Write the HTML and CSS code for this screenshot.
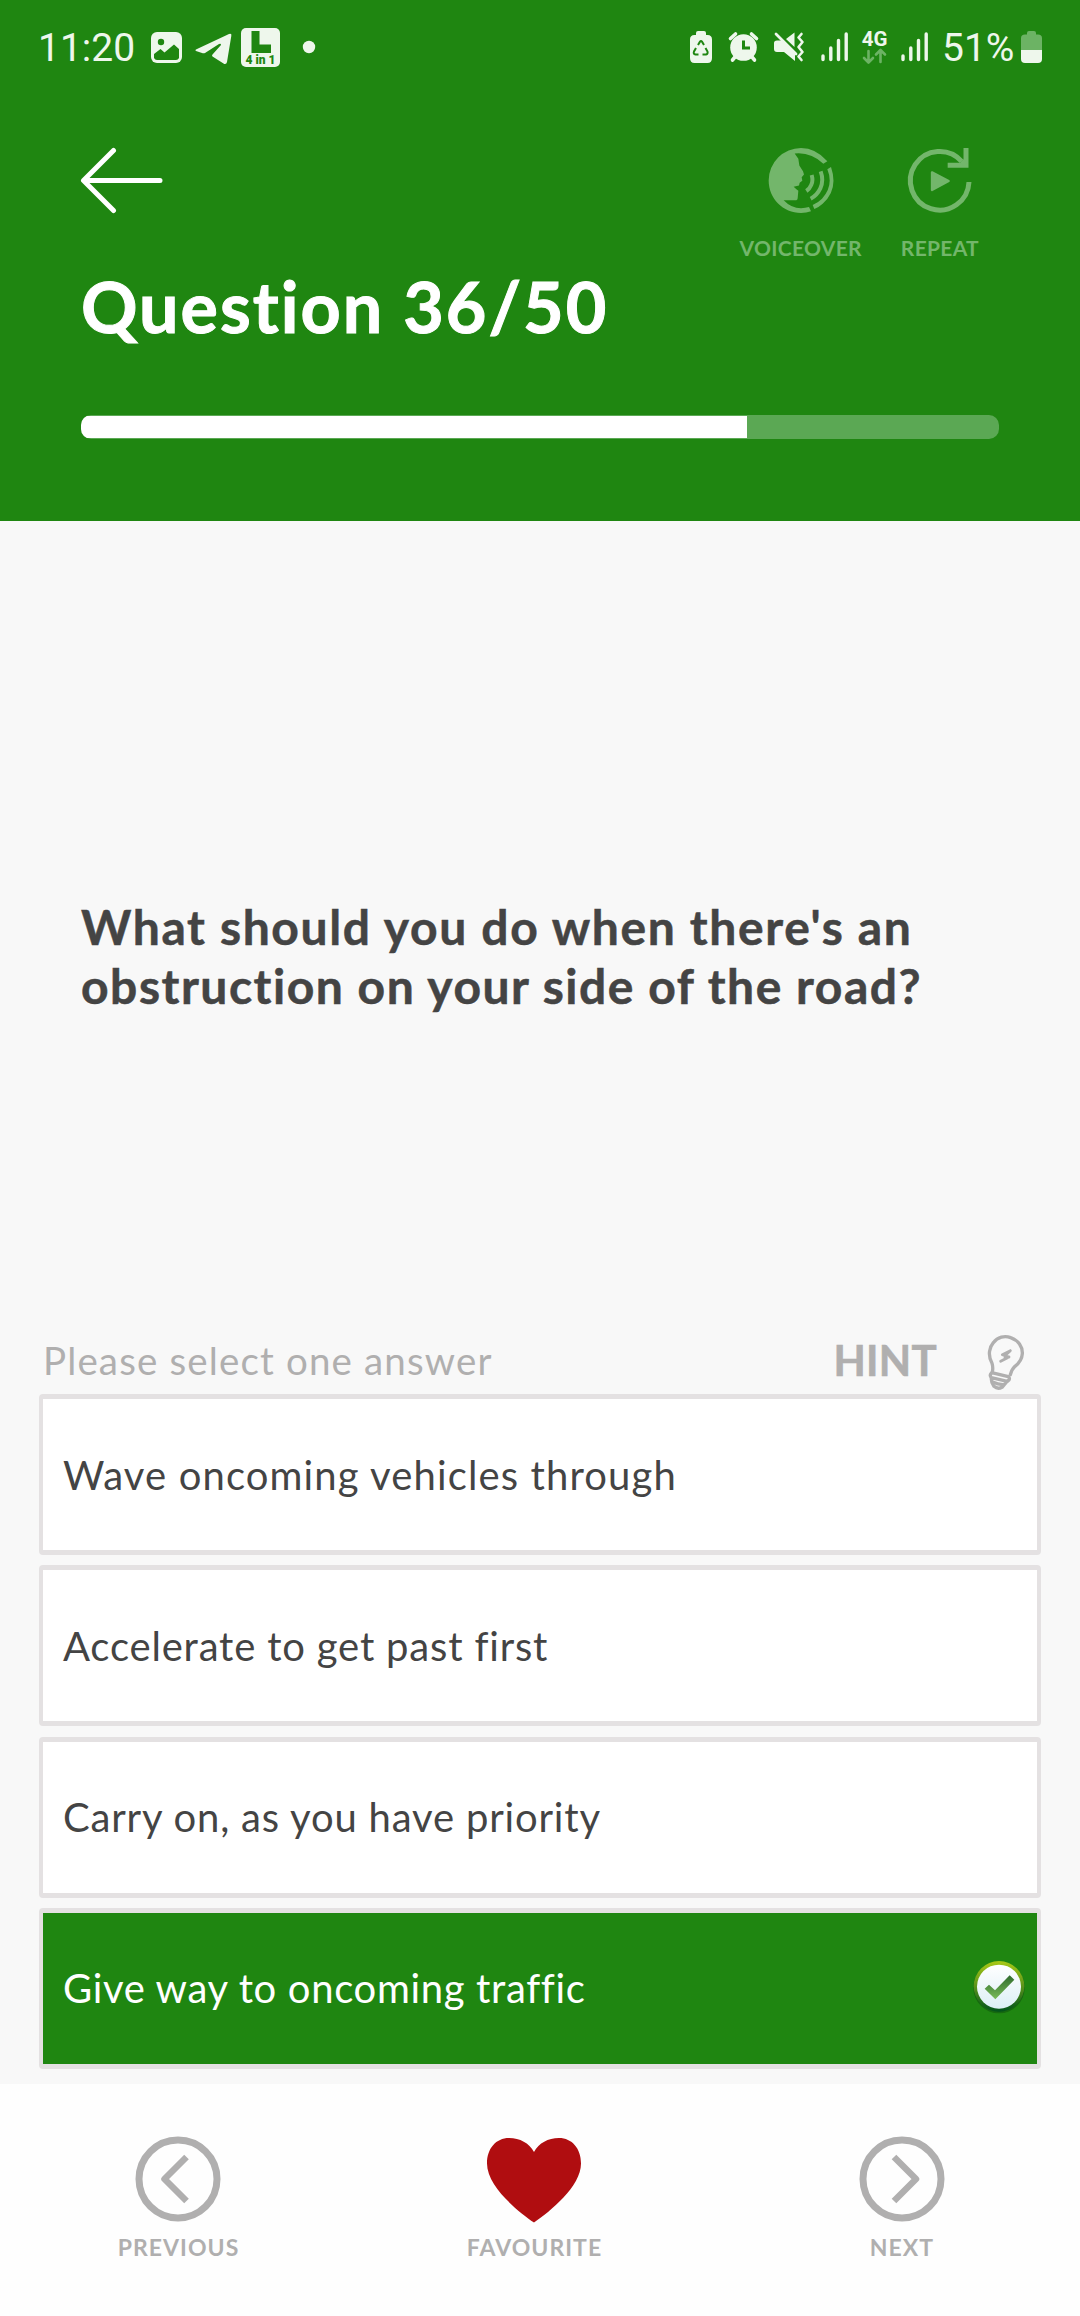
FILE: index.html
```html
<!DOCTYPE html>
<html lang="en">
<head>
<meta charset="utf-8">
<title>Question 36/50</title>
<link rel="stylesheet" href="styles.css">
</head>
<body>
<div class="screen">
  <header class="header">
    <div class="status">
      <span class="clock">11:20</span>
      <svg class="notifications" width="180" height="44" viewBox="146 26 180 44" fill="#eef7ec">
        <rect x="151" y="32" width="31" height="31" rx="6"/>
        <circle cx="161" cy="42" r="3.2" fill="#1f8611"/>
        <path d="M154 54l6.500-5 4 3.500 9.500-8 5 4.500v9q-1 2-3 2h-19q-2 0-3-2z" fill="#1f8611"/>
        <path d="M197 49L229 34q3-1 2.300 2L227 62q-.700 3-3.500 1.500l-11-7q-1-1 0-2L221 45q0-2-2-1L205 53q-1.500.700-3 0l-6-2q-1.500-1 1-2z"/>
        <rect x="241" y="28" width="39" height="39" rx="5"/>
        <path d="M251.500 31h8v13.500H271v8.500h-19.500z" fill="#1f8611"/>
        <text class="badge-text" x="260.500" y="64.300" text-anchor="middle" fill="#1f8611">4 in 1</text>
        <circle cx="309" cy="47" r="6.200"/>
      </svg>
      <svg class="signals" width="250" height="44" viewBox="686 26 250 44" fill="#eef7ec">
        <path d="M696 35v-2q0-2 2-2h6q2 0 2 2v2h1.500q4.500 0 4.500 4.500V58q0 5-4.500 5h-13q-4.500 0-4.500-5V39.500q0-4.500 4.500-4.500z"/>
        <path d="M698 45l2-3.300q1-1.200 2 0l2 3.300M705.500 48l2 3.500q.600 2.500-1.500 3h-3.500M698.500 54.500h-3q-2.500-.500-1.500-3l2-3.500" fill="none" stroke="#1f8611" stroke-width="2"/>
        <circle cx="743.500" cy="47.500" r="13.300"/>
        <path d="M730.500 38.500l5-4.500M756.500 38.500l-5-4.500M735 57l-2.500 3M752 57l2.500 3" stroke="#eef7ec" stroke-width="3.600" stroke-linecap="round"/>
        <path d="M743.500 40.500V48h6.500" fill="none" stroke="#1f8611" stroke-width="3"/>
        <path d="M774 43q0-2.500 3-2.500h5L795 53v8l-11-9h-7q-3 0-3-3zM786 39l8.500-6.500V47z"/>
        <path d="M776 34l20 20" stroke="#eef7ec" stroke-width="2.800" stroke-linecap="round"/>
        <path d="M801.500 34l-3 3.500 4 4.500-4 5 4 5-4 4.500 3 3.500" fill="none" stroke="#eef7ec" stroke-width="2.600" stroke-linecap="round" stroke-linejoin="round"/>
        <g id="bars" stroke="#eef7ec" stroke-width="3.400" stroke-linecap="round">
          <path d="M823 56v3.500M830.800 48v11.500M838.500 40.500v19M846.200 34v25.500"/>
        </g>
        <use href="#bars" x="80"/>
        <text class="network" x="874.500" y="45.800" text-anchor="middle">4G</text>
        <path d="M868.500 51v11M864 58l4.500 4.500 4.500-4.500M880.500 62V51M876 54.500l4.500-4.500 4.500 4.500" fill="none" stroke="#6cb364" stroke-width="2.600" stroke-linecap="round" stroke-linejoin="round"/>
      </svg>
      <span class="percent">51%</span>
      <svg class="battery" width="22" height="44" viewBox="1021 26 22 44">
        <path d="M1021 50V38q0-3.500 4-3.500h2V33q0-2 2-2h5q2 0 2 2v1.500h2q4 0 4 3.500v12z" fill="#6cb364"/>
        <path d="M1021 50h21v9q0 4-4 4h-13q-4 0-4-4z" fill="#eef7ec"/>
      </svg>
    </div>

    <div class="toolbar">
      <svg class="back" width="84" height="72" viewBox="80 145 84 72" fill="none" stroke="#fff" stroke-width="5" stroke-linecap="round" stroke-linejoin="round">
        <path d="M113.500 150.500L83.500 180.500l30 30M84 180.500h76"/>
      </svg>
      <div class="tools">
        <div class="tool">
          <svg width="72" height="72" viewBox="189 45 216 216">
            <path d="M297 54a97.500 97.500 0 0 0-97 97.500c0 54 43 97.500 97 97.500q16 0 30-5l-6-13q-11 3.500-24 3.500-29 0-52-24h38q4-1 4-6l2-22q-1-2-5-4l-9-8 16-4 2-8 8-6-2-11 7-8-3-10-11-17-3-20-11-16q49-5 86 31l12-8Q341 54 297 54z" fill="#73b66b"/>
            <path d="M376 118l11-7q23 67-25 110-12 11-25 16l-5-12q16-7 28-19 36-40 16-88z" fill="#73b66b"/>
            <g fill="none" stroke="#73b66b" stroke-width="12">
              <path d="M356 124q10 27-1 51-10 21-29 31M329 135q5 17-1 29-5 12-15 19"/>
            </g>
          </svg>
          <span class="tool-label">VOICEOVER</span>
        </div>
        <div class="tool">
          <svg width="72" height="72" viewBox="610 45 216 216" fill="none" stroke="#73b66b" stroke-width="15">
            <path d="M805 156a88 88 0 1 1-22-62"/>
            <path d="M796 54v52h-55"/>
            <path d="M784 92l10 12" stroke-width="14"/>
            <path d="M694 127l50 26-50 27z" fill="#73b66b" stroke-width="7" stroke-linejoin="round"/>
          </svg>
          <span class="tool-label">REPEAT</span>
        </div>
      </div>
    </div>

    <h1 class="title">Question 36/50</h1>
    <div class="progress"><div class="progress-fill" style="width: 72.5%"></div></div>
  </header>

  <main class="main">
    <h2 class="question">What should you do when there's an<br>obstruction on your side of the road?</h2>
    <div class="prompt">
      <span class="instruction">Please select one answer</span>
      <span class="hint">HINT</span>
      <svg width="42" height="60" viewBox="615 63 126 180" fill="none" stroke="#b0afaf" stroke-width="10" stroke-linecap="round" stroke-linejoin="round">
        <path d="M637 187q3-15-1-27c-14-26-7-49 4-62 13-17 34-22 52-15 23 8 36 27 35 48-1 15-8 27-22 38q-9 8-14 25"/>
        <path d="M635 188l50 12q5 4 2 10l-5 4-48-11q-7-8 1-15zM634 204q-1 14 8 25 11 10 24 3l15-18"/>
        <path d="M640 217q12 6 29 7"/>
        <path d="M691 122l-24 12 20 7-25 13M691 122l-15 14M687 141l-12 2" stroke-width="8.500"/>
      </svg>
    </div>
    <div class="answers">
      <div class="answer wide">Wave oncoming vehicles through</div>
      <div class="answer">Accelerate to get past first</div>
      <div class="answer">Carry on, as you have priority</div>
      <div class="answer selected">
        <span>Give way to oncoming traffic</span>
        <svg width="54" height="56" viewBox="216 240 162 168">
          <defs>
            <linearGradient id="ring" x1="0" y1="0" x2="0" y2="1"><stop offset="0" stop-color="#a9c916"/><stop offset=".5" stop-color="#5a941b"/><stop offset="1" stop-color="#00521c"/></linearGradient>
            <linearGradient id="disc" x1="0" y1="0" x2="0" y2="1"><stop offset="0" stop-color="#fff"/><stop offset="1" stop-color="#dceff6"/></linearGradient>
            <linearGradient id="tick" x1="0" y1="0" x2="0" y2="1"><stop offset="0" stop-color="#2f6b2d"/><stop offset="1" stop-color="#7abc59"/></linearGradient>
          </defs>
          <circle cx="297" cy="323" r="77" fill="#16690f"/>
          <circle cx="297" cy="319" r="76" fill="url(#ring)"/>
          <circle cx="297" cy="320" r="66" fill="url(#disc)"/>
          <path d="M254 326l13-12 18 17 44-45 14 13-57 59z" fill="url(#tick)"/>
        </svg>
      </div>
    </div>
  </main>

  <footer class="footer">
    <div class="nav">
      <svg width="90" height="90" viewBox="133.500 2133.500 90 90" fill="none" stroke="#b0afaf">
        <circle cx="178.500" cy="2178.500" r="39" stroke-width="7"/>
        <path d="M187 2156.500l-22 22 22 22" stroke-width="6.500" stroke-linejoin="round"/>
      </svg>
      <span class="nav-label">PREVIOUS</span>
    </div>
    <div class="nav">
      <svg width="96" height="90" viewBox="486 2133.500 96 90">
        <path d="M534 2222c-16-11-47-36-47-59 0-15 9-25.500 22-25.500 11 0 20 5 25 14 5-9 14-14 25-14 13 0 22 10.500 22 25.500 0 23-31 48-47 59z" fill="#b00d10"/>
      </svg>
      <span class="nav-label">FAVOURITE</span>
    </div>
    <div class="nav next">
      <svg width="90" height="90" viewBox="856.500 2133.500 90 90" fill="none" stroke="#b0afaf">
        <circle cx="901.500" cy="2178.500" r="39" stroke-width="7"/>
        <path d="M893.500 2156.500l22 22-22 22" stroke-width="6.500" stroke-linejoin="round"/>
      </svg>
      <span class="nav-label">NEXT</span>
    </div>
  </footer>
</div>
</body>
</html>
```
FILE: styles.css
```css
* {
  box-sizing: border-box;
}

body {
  margin: 0;
  font-family: Lato, "Open Sans", sans-serif;
  color: #444;
}

svg {
  display: block;
  flex: none;
}

.screen {
  display: flex;
  flex-direction: column;
  width: 1080px;
  height: 2316px;
  overflow: hidden;
  background: #f8f8f8;
}

.header {
  flex: none;
  height: 521px;
  background: #1f8611;
  color: #fff;
}

.status {
  display: flex;
  align-items: center;
  height: 119px;
  padding: 26px 37px 49px 38px;
  font-family: Roboto, sans-serif;
  font-size: 39px;
  line-height: 44px;
  color: #eef7ec;
}

.clock {
  width: 108px;
}

.badge-text {
  font: 900 12px Roboto, sans-serif;
}

.network {
  font: 700 20.500px Roboto, sans-serif;
}

.signals {
  margin-left: auto;
}

.percent {
  width: 85px;
  padding-left: 6px;
}

.toolbar {
  display: flex;
  justify-content: space-between;
  height: 115px;
  margin-top: 26px;
  padding: 0 101px 0 80px;
}

.tools {
  display: flex;
  gap: 39px;
}

.tool {
  display: flex;
  flex-direction: column;
  align-items: center;
  gap: 19px;
}

.tool-label {
  font-size: 21px;
  font-weight: 700;
  line-height: 24px;
  letter-spacing: 0.300px;
  color: #73b66b;
}

.title {
  margin: 6px 0 69px 81px;
  font-size: 70px;
  font-weight: 700;
  line-height: 80px;
  letter-spacing: 2px;
  -webkit-text-stroke: 1px #fff;
}

.progress {
  height: 24px;
  margin: 0 81px;
  padding: 1px 0;
  border-radius: 10px;
  overflow: hidden;
  background: #5ba854;
}

.progress-fill {
  height: 22px;
  background: #fff;
}

.main {
  flex: none;
  height: 1563px;
  padding-top: 376px;
}

.question {
  height: 434px;
  margin: 0 0 0 81px;
  font-size: 48px;
  font-weight: 700;
  line-height: 59px;
  letter-spacing: 1.530px;
  -webkit-text-stroke: 0.500px #444;
}

.question::first-line {
  letter-spacing: 1.640px;
}

.prompt {
  display: flex;
  height: 63px;
  padding: 0 53px 0 43px;
  line-height: 59px;
  color: #b0afaf;
}

.instruction {
  font-size: 38.500px;
  letter-spacing: 1.150px;
}

.hint {
  margin: 0 48px 0 auto;
  font-size: 42px;
  font-weight: 700;
  letter-spacing: 0.300px;
  -webkit-text-stroke: 0.600px #b0afaf;
}

.answers {
  display: grid;
  gap: 10.330px;
  padding: 0 39px;
}

.answer {
  display: flex;
  align-items: center;
  justify-content: space-between;
  height: 161px;
  padding: 0 11px 0 20px;
  border: solid #e4e1e2;
  border-width: 5px 4px;
  border-radius: 4px;
  background: #fff;
  font-size: 40px;
  letter-spacing: 0.820px;
}

.wide {
  letter-spacing: 1.120px;
}

.selected {
  background: #1f8611;
  background-clip: padding-box;
  color: #fff;
  letter-spacing: 0.660px;
}

.footer {
  display: grid;
  grid-template-columns: 356px 356px 1fr;
  flex: 1;
  padding-top: 49.500px;
  background: #fefefe;
}

.nav {
  display: flex;
  flex-direction: column;
  align-items: center;
  gap: 9.500px;
}

.next {
  padding-left: 11px;
}

.nav-label {
  padding-left: 1px;
  font-size: 23px;
  font-weight: 700;
  line-height: 28px;
  letter-spacing: 1.050px;
  color: #b0afaf;
}
```
